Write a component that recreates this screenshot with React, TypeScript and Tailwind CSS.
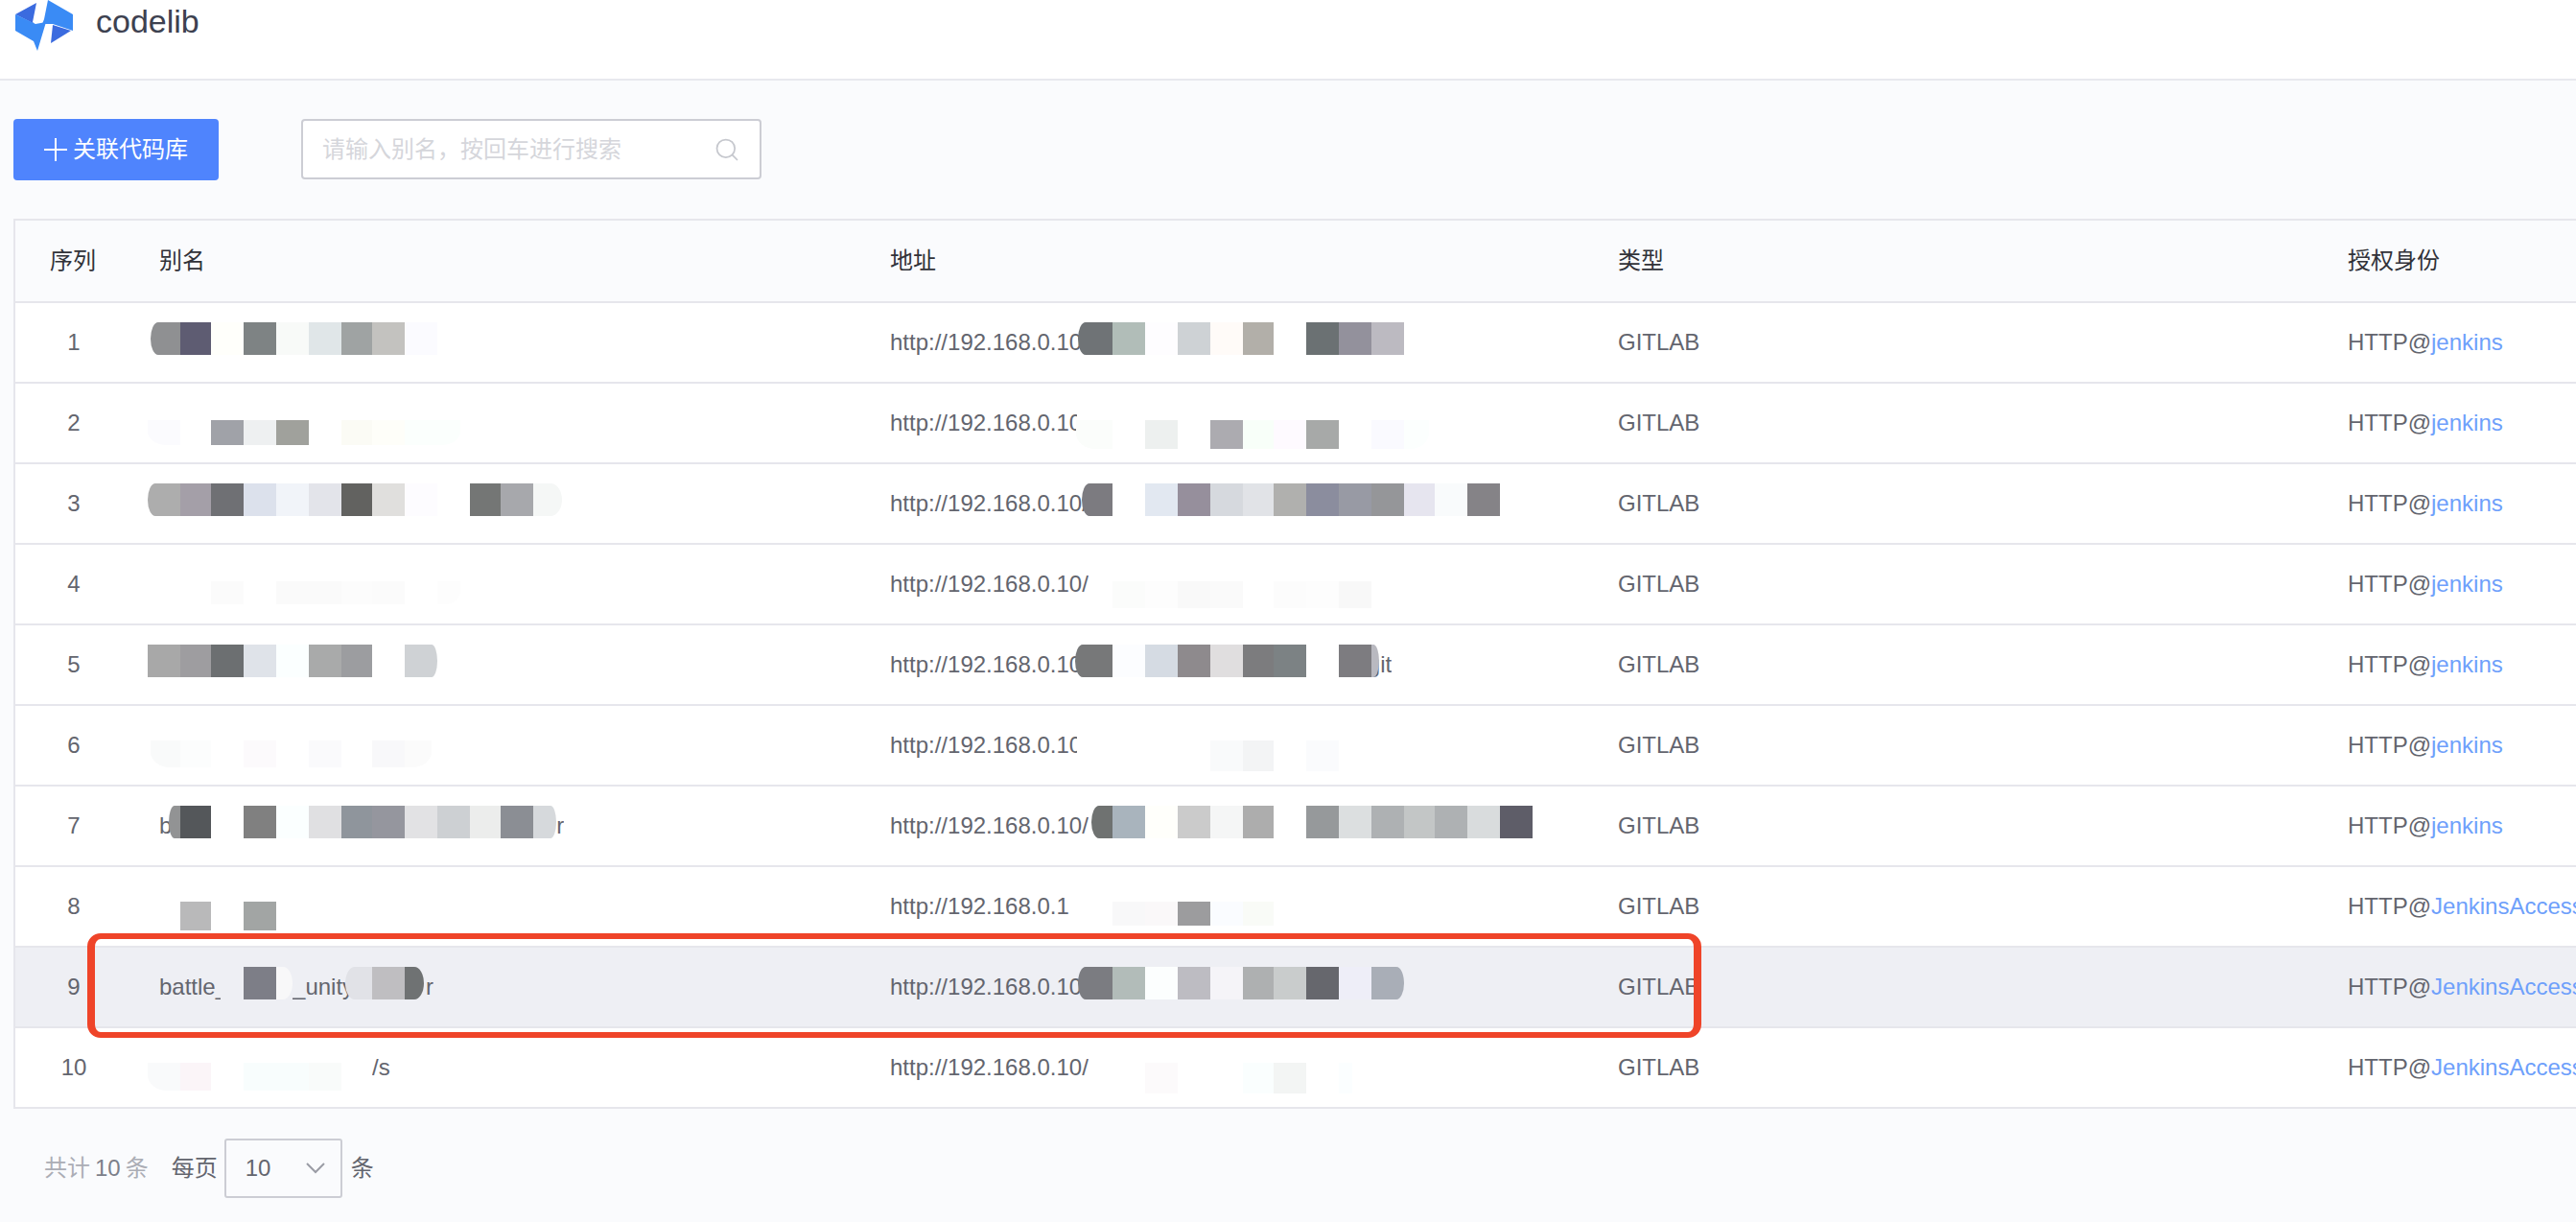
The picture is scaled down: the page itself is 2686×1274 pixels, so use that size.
import React from "react";
import { Search } from "lucide-react";

// mosaic cell edges as they fall in the two masked columns
const ALIAS_GRID = [188, 220, 254, 288, 322, 356, 388, 422, 456, 490, 522, 556, 586];
const ADDR_GRID = [1160, 1194, 1228, 1262, 1296, 1328, 1362, 1396, 1430, 1464, 1496, 1530, 1564, 1598];

type Patch = {
  grid: number[];
  x: number;
  y: number;
  h: number;
  colors: string[];
  end?: number;
  round?: string;
};

type Frag = { text: string; ml?: number; w?: number };

type Repo = {
  id: number;
  alias: Frag[];
  addr: Frag[];
  user: string;
  active?: boolean;
  patches: Patch[];
};

const HOST = "http://192.168.0.10/";

const repos: Repo[] = [
  {
    id: 1,
    alias: [],
    addr: [{ text: HOST }],
    user: "jenkins",
    patches: [
      { grid: ALIAS_GRID, x: 157, y: 336, h: 34, round: "rounded-l-[8px_17px]", colors: ["#8f9092", "#5e5c72", "#fffffb", "#7e8384", "#f8faf8", "#e0e6e8", "#9fa3a3", "#c3c2bf", "#fbfbff"] },
      { grid: ADDR_GRID, x: 1124, y: 336, h: 34, round: "rounded-l-[8px_17px]", colors: ["#6f7376", "#b1bdb8", "#fefdff", "#ced2d5", "#fffbf8", "#b2afa9", "#ffffff", "#6b7173", "#93919c", "#bcbac1"] },
    ],
  },
  {
    id: 2,
    alias: [],
    addr: [{ text: HOST, w: 195 }],
    user: "jenkins",
    patches: [
      { grid: ALIAS_GRID, x: 154, y: 438, h: 26, end: 480, round: "rounded-b-[20px_14px]", colors: ["#fbfbfe", "#ffffff", "#a0a2a8", "#eef0f1", "#a0a19c", "#ffffff", "#fbfbf5", "#fefef9", "#fbfffd"] },
      { grid: ADDR_GRID, x: 1122, y: 438, h: 30, end: 1490, round: "rounded-b-[20px_16px]", colors: ["#fbfdfb", "#ffffff", "#edf0ef", "#ffffff", "#acabb0", "#f8fff9", "#fefaff", "#a7a9a8", "#ffffff", "#fafaff", "#fcfffe"] },
    ],
  },
  {
    id: 3,
    alias: [],
    addr: [{ text: HOST }],
    user: "jenkins",
    patches: [
      { grid: ALIAS_GRID, x: 154, y: 504, h: 34, round: "rounded-l-[8px_17px] rounded-r-[12px_17px]", colors: ["#adadad", "#a49fa8", "#6f7074", "#dce1ec", "#f1f4f9", "#e3e4ea", "#626260", "#e0dfdd", "#fdfcff", "#ffffff", "#747675", "#a7a8ac", "#f5f7f6"] },
      { grid: ADDR_GRID, x: 1128, y: 504, h: 34, round: "rounded-l-[8px_17px]", colors: ["#7c7b80", "#ffffff", "#e2e8f1", "#968f9c", "#d6d9de", "#e1e3e7", "#b0b0ae", "#8b8d9e", "#989aa4", "#959699", "#e6e5ef", "#f9fbfc", "#858387"] },
    ],
  },
  {
    id: 4,
    alias: [],
    addr: [{ text: HOST }],
    user: "jenkins",
    patches: [
      { grid: ALIAS_GRID, x: 220, y: 606, h: 24, end: 480, round: "rounded-br-[16px_14px]", colors: ["#fbfbfb", "#ffffff", "#fafafa", "#fafafa", "#fcfcfc", "#fbfbfb", "#ffffff", "#fdfdfd"] },
      { grid: ADDR_GRID, x: 1134, y: 606, h: 28, colors: ["#ffffff", "#fbfcfb", "#fdfdfd", "#f9f9f9", "#fafafa", "#ffffff", "#fcfcfc", "#fdfdfd", "#f8f8f8"] },
    ],
  },
  {
    id: 5,
    alias: [],
    addr: [{ text: HOST }, { text: "git", ml: 291 }],
    user: "jenkins",
    patches: [
      { grid: ALIAS_GRID, x: 154, y: 672, h: 34, round: "rounded-r-[6px_17px]", colors: ["#a8a8a8", "#9e9da0", "#6c6f71", "#dfe3e9", "#fbffff", "#a9aaaa", "#9c9da0", "#ffffff", "#cfd2d5"] },
      { grid: ADDR_GRID, x: 1121, y: 672, h: 34, end: 1438, round: "rounded-l-[8px_17px] rounded-r-[6px_17px]", colors: ["#777879", "#fcfdff", "#d5dbe3", "#8e8a8d", "#e0dedf", "#7c7c7e", "#7c8284", "#ffffff", "#7d7c80", "#b9b9c0"] },
    ],
  },
  {
    id: 6,
    alias: [],
    addr: [{ text: HOST, w: 195 }],
    user: "jenkins",
    patches: [
      { grid: ALIAS_GRID, x: 157, y: 772, h: 28, end: 450, round: "rounded-b-[20px_16px]", colors: ["#f9fafa", "#fcfdfd", "#ffffff", "#fcfafc", "#ffffff", "#fafafc", "#ffffff", "#f8f8fa", "#fbfbfb"] },
      { grid: ADDR_GRID, x: 1123, y: 772, h: 32, colors: ["#ffffff", "#ffffff", "#ffffff", "#ffffff", "#f9fafb", "#f3f4f5", "#ffffff", "#fafbfd"] },
    ],
  },
  {
    id: 7,
    alias: [{ text: "b" }, { text: "r", ml: 401 }],
    addr: [{ text: HOST }],
    user: "jenkins",
    patches: [
      { grid: ALIAS_GRID, x: 176, y: 840, h: 34, end: 580, round: "rounded-l-[6px_17px] rounded-r-[6px_17px]", colors: ["#929394", "#54575a", "#ffffff", "#808080", "#fbffff", "#e0e0e2", "#8f959c", "#95969e", "#e2e2e4", "#cdd0d3", "#ecedec", "#8b8e94", "#d6d9dc"] },
      { grid: ADDR_GRID, x: 1138, y: 840, h: 34, round: "rounded-l-[8px_17px]", colors: ["#6f7271", "#a9b4bd", "#fffffb", "#cbcbcb", "#f5f6f6", "#adadad", "#ffffff", "#96999b", "#dcdfe0", "#aeb1b3", "#c3c6c6", "#aeb1b3", "#d9dcdd", "#5e5d68"] },
    ],
  },
  {
    id: 8,
    alias: [],
    addr: [{ text: "http://192.168.0.1" }],
    user: "JenkinsAccessToken",
    patches: [
      { grid: ALIAS_GRID, x: 188, y: 940, h: 30, colors: ["#b9b9ba", "#ffffff", "#a2a5a4"] },
      { grid: ADDR_GRID, x: 1160, y: 940, h: 25, colors: ["#f8f8f9", "#faf8f9", "#9c9c9e", "#fafcff", "#f9fbf7"] },
    ],
  },
  {
    id: 9,
    alias: [{ text: "battle_" }, { text: "_unity", ml: 67 }, { text: "r", ml: 75 }],
    addr: [{ text: HOST }],
    user: "JenkinsAccessToken",
    active: true,
    patches: [
      { grid: ALIAS_GRID, x: 230, y: 1008, h: 34, end: 305, round: "rounded-r-[10px_17px]", colors: ["#eeeff4", "#7d7e87", "#f8f8f9"] },
      { grid: ALIAS_GRID, x: 360, y: 1008, h: 34, end: 442, round: "rounded-l-[10px_17px] rounded-r-[10px_17px]", colors: ["#e1e2e7", "#bfbec1", "#6f7273"] },
      { grid: ADDR_GRID, x: 1124, y: 1008, h: 34, round: "rounded-l-[8px_17px] rounded-r-[8px_17px]", colors: ["#7b7c81", "#b2bcb9", "#fcfefe", "#bdbcc2", "#f5f4f8", "#aeb0b1", "#c9cccc", "#66676d", "#eeeef8", "#a9aeb7"] },
    ],
  },
  {
    id: 10,
    alias: [{ text: "/s", ml: 222 }],
    addr: [{ text: HOST }],
    user: "JenkinsAccessToken",
    patches: [
      { grid: ALIAS_GRID, x: 154, y: 1108, h: 29, end: 385, round: "rounded-bl-[20px_16px]", colors: ["#f9fafb", "#fbf5f8", "#ffffff", "#f8fdfd", "#f8fdfd", "#f9fbfa", "#ffffff"] },
      { grid: ADDR_GRID, x: 1194, y: 1108, h: 32, end: 1410, colors: ["#fcfafb", "#ffffff", "#ffffff", "#fafefe", "#f3f5f4", "#ffffff", "#fbfeff"] },
    ],
  },
];

const Logo = () => (
  <svg width="62" height="54" viewBox="0 0 62 54" className="shrink-0">
    <path d="M1 15 23 3 19 23 21 25Z" fill="#3b6bdf" />
    <path d="M1 15 22 25 33 23 24 53 20 43 1 32Z" fill="#3a8bf5" />
    <path d="M35 0 61 15V32L40 25H29L31 20Z" fill="#3a8bf5" />
    <path d="M40 26 59 32 38 45Z" fill="#3b6bdf" />
  </svg>
);

const Fragments = ({ parts }: { parts: Frag[] }) => (
  <div className="flex whitespace-nowrap">
    {parts.map((p, i) => (
      <span key={i} className="overflow-hidden" style={{ marginLeft: p.ml ?? 0, maxWidth: p.w }}>
        {p.text}
      </span>
    ))}
  </div>
);

// blurred-out block over a cell, built from flat mosaic squares
const Mosaic = ({ patch, rowTop }: { patch: Patch; rowTop: number }) => {
  const first = patch.grid.findIndex((edge) => edge > patch.x);
  return (
    <div
      className={`absolute z-10 flex overflow-hidden ${patch.round ?? ""}`}
      style={{ left: patch.x - 16, top: patch.y - rowTop, height: patch.h }}
    >
      {patch.colors.map((color, i) => {
        const left = i === 0 ? patch.x : patch.grid[first + i - 1];
        const last = i === patch.colors.length - 1;
        const right = last && patch.end ? patch.end : patch.grid[first + i];
        return <div key={i} style={{ width: right - left, backgroundColor: color }} />;
      })}
    </div>
  );
};

const COLS = "grid grid-cols-[150px_762px_759px_761px_1fr] items-center";

const App = () => {
  return (
    <div className="relative h-[1274px] w-[2686px] overflow-hidden bg-[#fafbfd] font-['Liberation_Sans','Noto_Sans_CJK_SC',sans-serif] text-[24px] text-[#63656e]">
      {/* Top bar */}
      <header className="flex h-[84px] items-start gap-[23px] border-b-2 border-[#e8e9ee] bg-white pl-[15px]">
        <Logo />
        <span className="mt-[2px] text-[34px] leading-[40px] text-[#3d4150]">codelib</span>
      </header>

      {/* Toolbar */}
      <div className="flex items-start pl-[14px] pt-[40px]">
        <button className="flex h-[64px] w-[214px] items-center gap-[6px] rounded-[4px] bg-[#4f84fd] pl-[32px] text-white">
          <svg width="24" height="24" viewBox="0 0 24 24" className="shrink-0">
            <path d="M12 0V24M0 12H24" stroke="#fff" strokeWidth="2" fill="none" />
          </svg>
          <span>关联代码库</span>
        </button>
        <div className="ml-[86px] flex h-[63px] w-[480px] items-center rounded-[4px] border-2 border-[#cccdd4] bg-white">
          <input
            placeholder="请输入别名，按回车进行搜索"
            className="min-w-0 flex-1 bg-transparent pl-[20px] outline-none placeholder:text-[#d5d6db]"
          />
          <Search size={28} strokeWidth={1.5} className="mr-[20px] shrink-0 text-[#c6c8ce]" />
        </div>
      </div>

      {/* Table */}
      <div className="ml-[14px] mt-[40px] w-[2800px] border-l-2 border-t-2 border-[#e6e6ec]">
        <div className={`${COLS} h-[86px] border-b-2 border-[#e6e6ec] bg-[#fafbfd] text-[#313238]`}>
          <div className="w-[120px] text-center">序列</div>
          <div>别名</div>
          <div>地址</div>
          <div>类型</div>
          <div>授权身份</div>
        </div>
        {repos.map((repo, i) => (
          <div
            key={repo.id}
            className={`${COLS} relative h-[84px] border-b-2 border-[#e6e6ec] ${repo.active ? "bg-[#eeeff4]" : "bg-white"}`}
          >
            <div className="w-[122px] text-center">{repo.id}</div>
            <Fragments parts={repo.alias} />
            <Fragments parts={repo.addr} />
            <div>GITLAB</div>
            <div className="whitespace-nowrap">
              HTTP@<a className="text-[#6ea0fb]">{repo.user}</a>
            </div>
            {repo.patches.map((patch, j) => (
              <Mosaic key={j} patch={patch} rowTop={316 + 84 * i} />
            ))}
          </div>
        ))}
      </div>

      {/* Pagination */}
      <div className="flex items-center pl-[46px] pt-[31px]">
        <div className="flex gap-[5px] text-[#abadb5]">
          <span>共计</span>
          <span className="text-[#7c7f8a]">10</span>
          <span>条</span>
        </div>
        <span className="ml-[24px]">每页</span>
        <div className="ml-[7px] flex h-[62px] w-[123px] items-center justify-between rounded-[3px] border-2 border-[#cccdd4] pl-[20px] pr-[16px]">
          <span>10</span>
          <svg width="20" height="12" viewBox="0 0 20 12">
            <path d="M1 1 10 10 19 1" stroke="#9a9ca5" strokeWidth="2" fill="none" />
          </svg>
        </div>
        <span className="ml-[9px]">条</span>
      </div>

      {/* Red annotation round row 9 */}
      <div className="absolute left-[91px] top-[973px] z-20 h-[109px] w-[1683px] rounded-[14px] border-x-[8px] border-y-[6px] border-[#ef4429]" />
    </div>
  );
};

export default App;
